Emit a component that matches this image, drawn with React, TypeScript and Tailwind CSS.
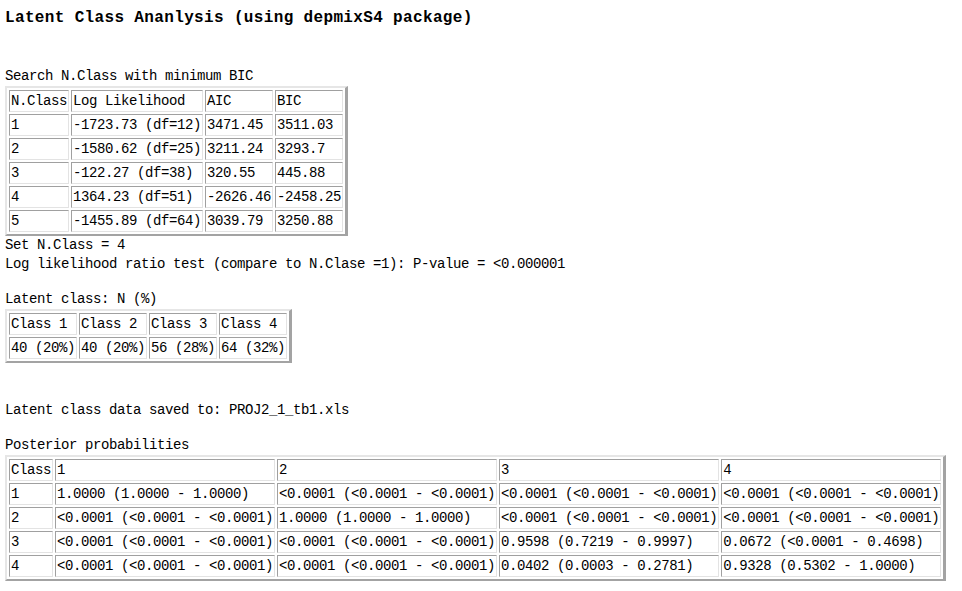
import React from 'react';

// shared look for the old-style "border=1" html tables
const mono = { fontFamily: '"Liberation Mono", "DejaVu Sans Mono", monospace' };

interface GridProps {
  rows: string[][];
}

function Grid({ rows }: GridProps) {
  return (
    <table className="border-separate border-spacing-[2px] border-2 border-r-[3px] border-t-[#e6e6e6] border-l-[#e6e6e6] border-r-[#a3a3a3] border-b-[#a3a3a3]">
      <tbody>
        {rows.map((row, i) =>
        <tr key={i}>
            {row.map((cell, j) =>
          <td
            key={j}
            className="border border-t-[#a0a0a0] border-l-[#a0a0a0] border-r-[#e3e3e3] border-b-[#e3e3e3] p-px h-[22px] align-middle text-left whitespace-nowrap leading-[18px]">

                {cell}
              </td>
          )}
          </tr>
        )}
      </tbody>
    </table>);

}

const bicRows = [
['N.Class', 'Log Likelihood', 'AIC', 'BIC'],
['1', '-1723.73 (df=12)', '3471.45', '3511.03'],
['2', '-1580.62 (df=25)', '3211.24', '3293.7'],
['3', '-122.27 (df=38)', '320.55', '445.88'],
['4', '1364.23 (df=51)', '-2626.46', '-2458.25'],
['5', '-1455.89 (df=64)', '3039.79', '3250.88']];


const sizeRows = [
['Class 1', 'Class 2', 'Class 3', 'Class 4'],
['40 (20%)', '40 (20%)', '56 (28%)', '64 (32%)']];


const lt = '<0.0001 (<0.0001 - <0.0001)';
const postRows = [
['Class', '1', '2', '3', '4'],
['1', '1.0000 (1.0000 - 1.0000)', lt, lt, lt],
['2', lt, '1.0000 (1.0000 - 1.0000)', lt, lt],
['3', lt, lt, '0.9598 (0.7219 - 0.9997)', '0.0672 (<0.0001 - 0.4698)'],
['4', lt, lt, '0.0402 (0.0003 - 0.2781)', '0.9328 (0.5302 - 1.0000)']];


export default function App() {
  return (
    <div
      className="w-[962px] h-[591px] bg-white text-black px-[5px] pt-[7px] overflow-hidden text-[14px] tracking-[-0.4px] leading-[19px]"
      style={mono}>

      <h3 className="h-[22px] leading-[22px] text-[16px] font-bold tracking-[0.35px] whitespace-nowrap">
        Latent Class Ananlysis (using depmixS4 package)
      </h3>

      {/* model search */}
      <div className="mt-[38px]">Search N.Class with minimum BIC</div>
      <Grid rows={bicRows} />
      <div>Set N.Class = 4</div>
      <div>Log likelihood ratio test (compare to N.Clase =1): P-value = &lt;0.000001</div>

      {/* class sizes */}
      <div className="mt-[16px]">Latent class: N (%)</div>
      <Grid rows={sizeRows} />

      <div className="mt-[38px]">Latent class data saved to: PROJ2_1_tb1.xls</div>

      {/* posterior probs */}
      <div className="mt-[16px]">Posterior probabilities</div>
      <Grid rows={postRows} />
    </div>);

}
